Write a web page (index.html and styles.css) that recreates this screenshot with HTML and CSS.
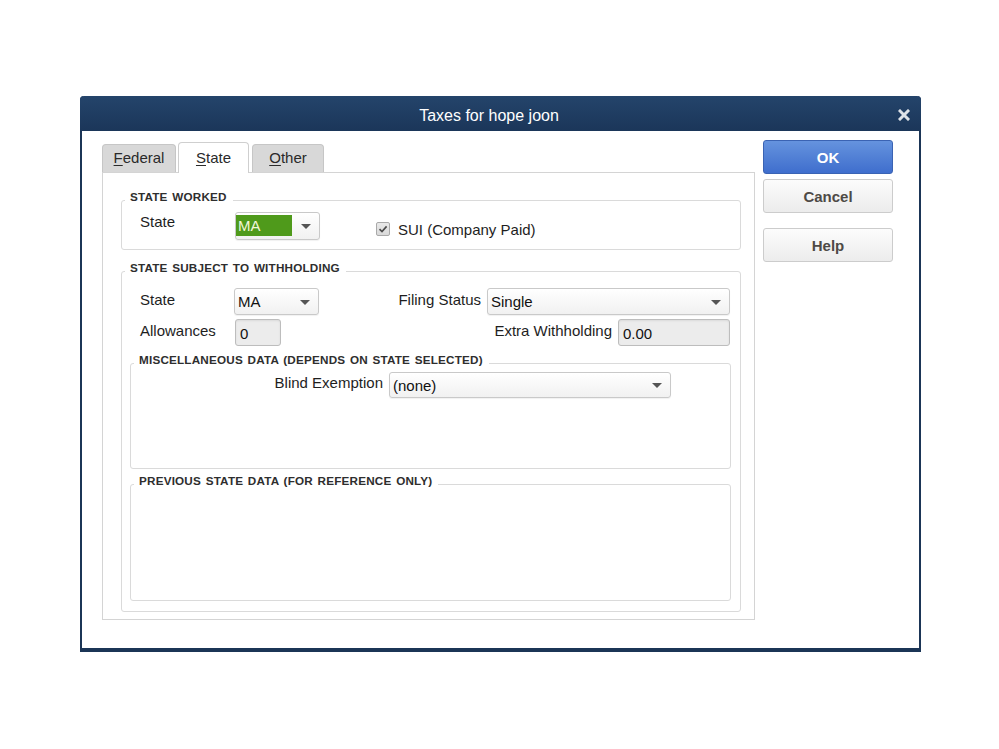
FILE: index.html
```html
<!DOCTYPE html>
<html>
<head>
<meta charset="utf-8">
<title>Taxes for hope joon</title>
<link rel="stylesheet" href="styles.css">
</head>
<body>
<div class="window">
  <div class="titlebar">
    <span class="title">Taxes for hope joon</span>
    <span class="close"><svg width="12" height="12" viewBox="0 0 12 12"><path d="M2 2 L10 10 M10 2 L2 10" stroke="#dde2e8" stroke-width="3" stroke-linecap="square" fill="none"/></svg></span>
  </div>
  <div class="content">
    <div class="main">
      <div class="tabs">
        <div class="tab t-fed"><u>F</u>ederal</div>
        <div class="tab t-state active"><u>S</u>tate</div>
        <div class="tab t-other"><u>O</u>ther</div>
      </div>
      <div class="panel">
        <div class="group g-worked">
          <span class="legend">STATE WORKED</span>
          <span class="lbl lbl-state1">State</span>
          <div class="select sel-state hl"><span class="val">MA</span><span class="arrow"></span></div>
          <div class="check">
            <span class="box"><svg width="10" height="10" viewBox="0 0 10 10"><path d="M1.5 5.2 L4 7.6 L8.6 2.4" stroke="#4a4a4a" stroke-width="1.6" fill="none"/></svg></span>
            <span class="check-text">SUI (Company Paid)</span>
          </div>
        </div>
        <div class="group g-withhold">
          <span class="legend">STATE SUBJECT TO WITHHOLDING</span>
          <div class="row">
            <span class="lbl lbl-first">State</span>
            <div class="select sel-state2"><span class="val">MA</span><span class="arrow"></span></div>
            <div class="right">
              <span class="lbl">Filing Status</span>
              <div class="select sel-filing"><span class="val">Single</span><span class="arrow"></span></div>
            </div>
          </div>
          <div class="row row2">
            <span class="lbl lbl-first lbl-allow">Allowances</span>
            <div class="input in-allow">0</div>
            <div class="right">
              <span class="lbl">Extra Withholding</span>
              <div class="input in-extra">0.00</div>
            </div>
          </div>
          <div class="group g-misc">
            <span class="legend">MISCELLANEOUS DATA (DEPENDS ON STATE SELECTED)</span>
            <div class="misc-row">
              <span class="lbl lbl-blind">Blind Exemption</span>
              <div class="select sel-blind"><span class="val">(none)</span><span class="arrow"></span></div>
            </div>
          </div>
          <div class="group g-prev">
            <span class="legend">PREVIOUS STATE DATA (FOR REFERENCE ONLY)</span>
          </div>
        </div>
      </div>
    </div>
    <div class="buttons">
      <div class="btn btn-ok">OK</div>
      <div class="btn btn-cancel">Cancel</div>
      <div class="btn btn-help">Help</div>
    </div>
  </div>
</div>
</body>
</html>
```
FILE: styles.css
```css
* { box-sizing: border-box; }
html, body { margin: 0; padding: 0; background: #ffffff; }
body {
  font-family: "Liberation Sans", Arial, sans-serif;
  font-size: 15px;
  color: #1e1e1e;
}
.window {
  margin: 96px 0 0 80px;
  width: 841px;
  border: 2px solid #1b3556;
  border-top: 0;
  border-bottom: 4px solid #1b3556;
  border-radius: 4px 4px 0 0;
  background: #fff;
}
.titlebar {
  display: flex;
  height: 35px;
  margin: 0 -2px;
  padding-top: 4px;
  border-radius: 4px 4px 0 0;
  background: linear-gradient(#24446b, #1b3659);
  align-items: center;
}
.title {
  flex: 1;
  text-align: center;
  color: #ffffff;
  font-size: 16px;
  padding-left: 2px;
}
.close {
  width: 25px;
  padding-right: 9px;
  padding-bottom: 2px;
  display: flex;
  justify-content: center;
}
.content {
  display: flex;
  padding: 9px 26px 28px 20px;
}
.main { width: 653px; }
.tabs {
  display: flex;
  align-items: flex-end;
  height: 30px;
  margin-top: 2px;
  position: relative;
  z-index: 1;
}
.tab {
  height: 28px;
  line-height: 26px;
  text-align: center;
  background: #d8d8d8;
  border: 1px solid #c6c6c6;
  border-bottom: 0;
  border-radius: 4px 4px 0 0;
  color: #2a2a2a;
}
.tab u { text-decoration: underline; text-underline-offset: 2px; }
.t-fed { width: 74px; margin-right: 2px; }
.t-state { width: 71px; margin-right: 3px; }
.t-other { width: 72px; }
.tab.active {
  height: 31px;
  margin-bottom: -1px;
  background: #ffffff;
  border-color: #cfcfcf;
  line-height: 29px;
}
.panel {
  height: 448px;
  border: 1px solid #d4d4d4;
  padding: 27px 13px 7px 18px;
}
.group {
  position: relative;
  border: 1px solid #dadada;
  border-radius: 3px;
}
.legend {
  position: absolute;
  top: -11px;
  left: 3px;
  padding: 0 6px 0 5px;
  background: #ffffff;
  font-size: 11.7px;
  font-weight: bold;
  line-height: 14px;
  letter-spacing: 0.2px;
  word-spacing: 1.2px;
  color: #2e2e2e;
  white-space: nowrap;
}
.g-worked {
  height: 50px;
  display: flex;
  align-items: flex-start;
  padding: 11px 0 0 18px;
}
.lbl { line-height: 18px; white-space: nowrap; color: #1e1e1e; }
.lbl-state1 { width: 95px; margin-top: 1px; }
.select {
  display: flex;
  align-items: stretch;
  border: 1px solid #c9c9c9;
  border-radius: 3px;
  background: linear-gradient(#ffffff, #f1f1f1);
  box-shadow: 0 1px 1px rgba(0,0,0,0.06);
  padding: 2px 0 2px 0;
}
.select .val {
  flex: 1;
  display: flex;
  align-items: center;
  padding-left: 3px;
  color: #111;
}
.select .arrow {
  width: 27px;
  display: flex;
  align-items: center;
  justify-content: center;
}
.select .arrow::before {
  content: "";
  width: 0;
  height: 0;
  border-left: 5px solid transparent;
  border-right: 5px solid transparent;
  border-top: 5px solid #555555;
  margin-top: 1px;
}
.sel-state { width: 85px; height: 28px; padding-top: 2px; padding-bottom: 3px; }
.hl .val {
  background: #4f9a1b;
  color: #f2f6d8;
  padding-left: 2px;
  margin-left: 0;
}
.check {
  display: flex;
  align-items: center;
  height: 16px;
  margin-left: 56px;
  margin-top: 9px;
}
.box {
  width: 14px;
  height: 14px;
  border: 1px solid #a9a9a9;
  border-radius: 2px;
  background: linear-gradient(#e9e9e9, #d9d9d9);
  display: flex;
  align-items: center;
  justify-content: center;
  margin-right: 8px;
}
.g-withhold {
  margin-top: 21px;
  height: 341px;
  padding: 16px 9px 10px 8px;
}
.row {
  display: flex;
  align-items: flex-start;
  height: 27px;
  padding: 0 1px 0 10px;
}
.row2 { margin-top: 4px; }
.row .lbl { line-height: 24px; }
.lbl-first { width: 94px; }
.lbl-allow { width: 95px; }
.sel-state2 { width: 85px; height: 27px; }
.right {
  margin-left: auto;
  display: flex;
  align-items: flex-start;
  gap: 6px;
}
.sel-filing { width: 243px; height: 27px; }
.input {
  height: 27px;
  border: 1px solid #bdbdbd;
  border-radius: 3px;
  background: #ececec;
  box-shadow: inset 0 1px 2px rgba(0,0,0,0.08);
  padding-left: 4px;
  line-height: 26px;
  padding-top: 1px;
  color: #111;
}
.in-allow { width: 46px; }
.in-extra { width: 112px; }
.g-misc {
  margin-top: 17px;
  height: 106px;
  padding: 8px 0 0 0;
}
.misc-row {
  display: flex;
  align-items: flex-start;
  gap: 6px;
}
.lbl-blind { width: 252px; text-align: right; line-height: 22px; }
.sel-blind { width: 282px; height: 26px; }
.g-prev {
  margin-top: 15px;
  height: 117px;
}
.buttons {
  width: 130px;
  margin-left: 8px;
  display: flex;
  flex-direction: column;
}
.btn {
  height: 34px;
  border-radius: 3px;
  display: flex;
  align-items: center;
  justify-content: center;
  font-weight: bold;
  font-size: 15px;
}
.btn-ok {
  background: linear-gradient(#6593de, #3f6ecd);
  border: 1px solid #3a63b3;
  color: #ffffff;
}
.btn-cancel, .btn-help {
  background: linear-gradient(#fcfcfc, #ececec);
  border: 1px solid #cccccc;
  color: #4e4a46;
}
.btn-cancel { margin-top: 5px; }
.btn-help { margin-top: 15px; }
```
